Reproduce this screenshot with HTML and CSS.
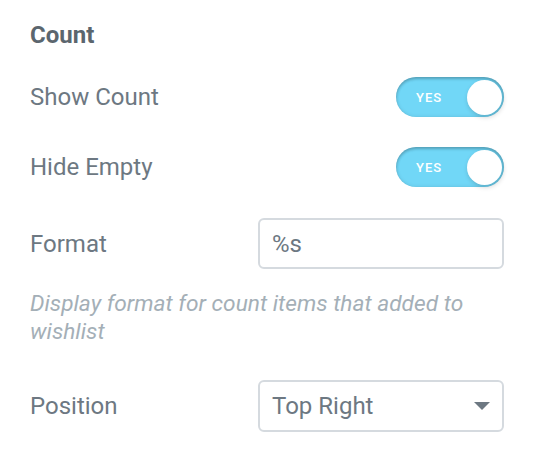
FILE: index.html
```html
<!DOCTYPE html>
<html>
<head>
<meta charset="utf-8">
<link rel="stylesheet" href="styles.css">
</head>
<body>
<div class="panel">
  <div class="heading">Count</div>

  <div class="row row-toggle first">
    <div class="label">Show Count</div>
    <div class="switch">
      <span class="switch-text">YES</span>
      <span class="switch-knob"></span>
    </div>
  </div>

  <div class="row row-toggle second">
    <div class="label">Hide Empty</div>
    <div class="switch">
      <span class="switch-text">YES</span>
      <span class="switch-knob"></span>
    </div>
  </div>

  <div class="row row-input">
    <div class="label">Format</div>
    <div class="field">%s</div>
  </div>

  <div class="description">Display format for count items that added to wishlist</div>

  <div class="row row-select">
    <div class="label">Position</div>
    <div class="field select">
      <span>Top Right</span>
      <svg class="caret" width="16" height="8" viewBox="0 0 16 8"><path d="M0 0 H16 L8 8 Z" fill="#6d7882"/></svg>
    </div>
  </div>
</div>
</body>
</html>
```

FILE: styles.css
```css
html, body {
  margin: 0;
  padding: 0;
  background: #ffffff;
}

body {
  font-family: Roboto, "Liberation Sans", Arial, sans-serif;
  color: #6d7882;
}

.panel {
  width: 536px;
  height: 452px;
  box-sizing: border-box;
  padding: 20px 32px 0 30px;
  display: flex;
  flex-direction: column;
}

.heading {
  font-size: 24px;
  font-weight: 700;
  line-height: 30px;
  color: #5b666e;
}

.row {
  display: flex;
  align-items: center;
  justify-content: space-between;
}

.label {
  font-size: 24px;
  line-height: 30px;
  color: #6d7882;
}

.row-toggle {
  height: 40px;
}

.row-toggle.first {
  margin-top: 27px;
}

.row-toggle.second {
  margin-top: 30px;
}

.switch {
  position: relative;
  width: 108px;
  height: 40px;
  border-radius: 20px;
  background: #71d7f7;
  box-shadow: inset 0 2px 3px rgba(0, 0, 0, 0.22), inset 0 0 4px rgba(0, 0, 0, 0.1);
  display: flex;
  align-items: center;
  box-sizing: border-box;
  padding-left: 20px;
}

.switch-text {
  font-size: 13px;
  font-weight: 500;
  letter-spacing: 1px;
  color: #ffffff;
  line-height: 13px;
}

.switch-knob {
  position: absolute;
  right: 2px;
  top: 3px;
  width: 35px;
  height: 35px;
  border-radius: 50%;
  background: #ffffff;
  box-shadow: 1px 2px 5px rgba(0, 0, 0, 0.18);
}

.row-input {
  margin-top: 31px;
  height: 51px;
}

.row-select {
  margin-top: 34px;
  height: 52px;
}

.field {
  width: 246px;
  height: 100%;
  box-sizing: border-box;
  border: 2px solid #d5dadf;
  border-radius: 6px;
  padding: 0 12px 0 12px;
  display: flex;
  align-items: center;
  font-size: 24px;
  color: #6d7882;
}

.select {
  justify-content: space-between;
  padding-right: 12px;
}

.caret {
  display: block;
}

.description {
  margin-top: 21px;
  font-size: 22.7px;
  line-height: 28px;
  font-style: italic;
  color: #a4afb7;
}
```
